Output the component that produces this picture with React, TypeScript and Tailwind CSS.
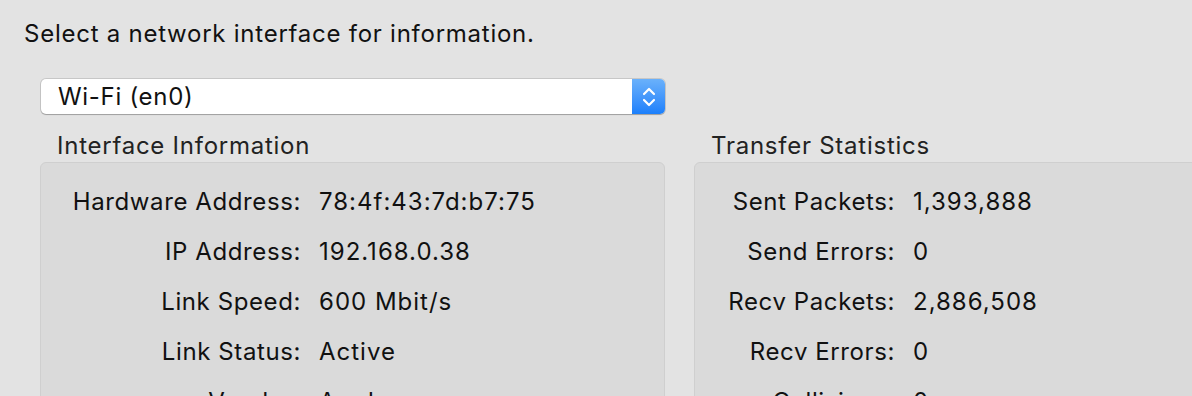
const info = [
  ["Hardware Address:", "78:4f:43:7d:b7:75"],
  ["IP Address:", "192.168.0.38"],
  ["Link Speed:", "600 Mbit/s"],
  ["Link Status:", "Active"],
  ["Vendor:", "Apple"],
];

const stats = [
  ["Sent Packets:", "1,393,888"],
  ["Send Errors:", "0"],
  ["Recv Packets:", "2,886,508"],
  ["Recv Errors:", "0"],
  ["Collisions:", "0"],
];

const Rows = ({ rows, labelW }: { rows: string[][]; labelW: string }) => (
  <div className="pt-[14px]">
    {rows.map(([label, value]) => (
      <div key={label} className="flex h-[50px] items-center">
        <span className={`${labelW} shrink-0 text-right tracking-[0.6px]`}>{label}</span>
        <span className="ml-[18px] tracking-[1px]">{value}</span>
      </div>
    ))}
  </div>
);

const App = () => {
  return (
    <div
      className="h-[396px] w-[1192px] overflow-hidden bg-[#e3e3e3] pl-6 pt-[20px] text-[24px] text-[#111]"
      style={{ fontFamily: 'Inter, "Liberation Sans", Arial, sans-serif' }}
    >
      <p className="leading-[28px] tracking-[0.75px]">Select a network interface for information.</p>

      <div className="ml-[17px] mt-[31px] flex h-[35px] w-[624px] items-center overflow-hidden rounded-[5px] bg-white shadow-[0_0_0_1px_rgba(0,0,0,0.12),0_1px_1px_rgba(0,0,0,0.2)]">
        <span className="flex-1 pl-[17px] leading-[35px] tracking-[0.7px]">Wi-Fi (en0)</span>
        <div className="flex h-full w-[33px] items-center justify-center bg-gradient-to-b from-[#6ab1fb] to-[#1a7ffb]">
          <svg width="16" height="24" viewBox="0 0 16 24" fill="none" stroke="white" strokeWidth="2.2" strokeLinecap="round" strokeLinejoin="round">
            <path d="M3 9l5-5 5 5" />
            <path d="M3 15l5 5 5-5" />
          </svg>
        </div>
      </div>

      <div className="ml-4 mt-[18px] flex gap-[29px]">
        <div className="w-[625px] shrink-0">
          <h2 className="pl-[17px] leading-[28px] tracking-[0.75px] text-[#222]">Interface Information</h2>
          <div className="mt-[2px] h-[300px] rounded-[6px] border border-[#cfcfcf] bg-[#dadada]">
            <Rows rows={info} labelW="w-[260px]" />
          </div>
        </div>
        <div className="w-[600px] shrink-0">
          <h2 className="pl-[17px] leading-[28px] tracking-[0.75px] text-[#222]">Transfer Statistics</h2>
          <div className="mt-[2px] h-[300px] rounded-[6px] border border-[#cfcfcf] bg-[#dadada]">
            <Rows rows={stats} labelW="w-[200px]" />
          </div>
        </div>
      </div>
    </div>
  );
};

export default App;
